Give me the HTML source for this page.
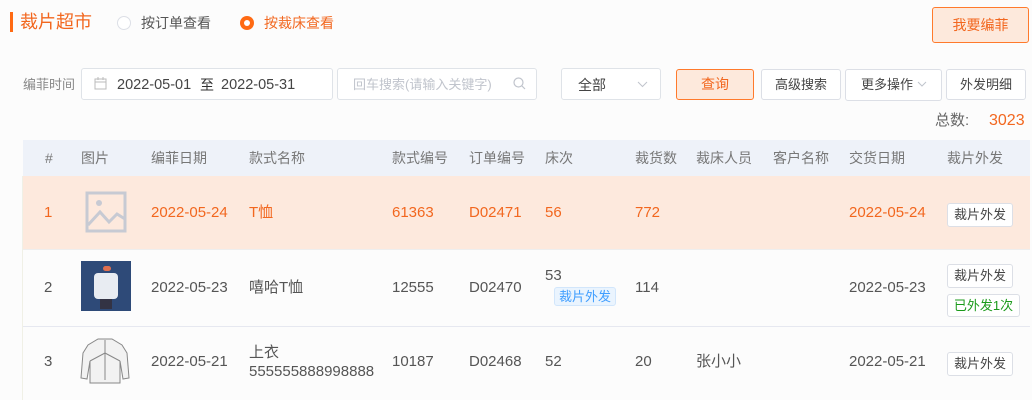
<!DOCTYPE html>
<html><head><meta charset="utf-8"><style>
*{box-sizing:border-box;margin:0;padding:0}
body{width:1032px;height:400px;overflow:hidden;background:#fcfcfc;font-family:"Liberation Sans","Noto Sans CJK SC",sans-serif;font-size:14px;color:#555;position:relative}
.a{position:absolute;white-space:nowrap}
.d{font-size:15px}
.box{position:absolute;border:1px solid #dfe3e8;border-radius:3px;background:#fff}
.btn{position:absolute;border:1px solid #dcdfe6;border-radius:3px;background:#fff;text-align:center;font-size:13px;color:#444}
.o{color:#f2671f}
.th{position:absolute;top:140px;height:36px;line-height:36px;color:#777;font-size:14px}
</style></head><body>
<div class="a" style="left:10px;top:12px;width:3px;height:20px;background:#ff6a13"></div>
<div class="a o" style="left:20px;top:9px;font-size:18px;line-height:26px">裁片超市</div>
<div class="a" style="left:117px;top:16px;width:14px;height:14px;border:1px solid #dcdfe6;border-radius:50%;background:#fff"></div>
<div class="a" style="left:141px;top:13px;line-height:20px;color:#555">按订单查看</div>
<div class="a" style="left:240px;top:16px;width:14px;height:14px;border-radius:50%;background:#ff6a13"><div style="margin:4px;width:6px;height:6px;background:#fff;border-radius:50%"></div></div>
<div class="a o" style="left:264px;top:13px;line-height:20px">按裁床查看</div>
<div class="btn" style="left:932px;top:7px;width:97px;height:36px;line-height:34px;background:#fde9dc;border-color:#ff7a2c;color:#f2671f;font-size:14px">我要编菲</div>

<div class="a" style="left:23px;top:75px;line-height:20px;color:#888;font-size:13px">编菲时间</div>
<div class="box" style="left:81px;top:68px;width:252px;height:32px"></div>
<svg class="a" style="left:94px;top:77px" width="13" height="13" viewBox="0 0 13 13" fill="none" stroke="#bbb"><rect x="1" y="2" width="11" height="10"/><line x1="1" y1="5" x2="12" y2="5"/><line x1="4" y1="0" x2="4" y2="3"/><line x1="9" y1="0" x2="9" y2="3"/></svg>
<div class="a" style="left:117px;top:75px;line-height:20px;color:#444;font-size:14.5px">2022-05-01</div>
<div class="a" style="left:200px;top:75px;line-height:20px;color:#333">至</div>
<div class="a" style="left:221px;top:75px;line-height:20px;color:#444;font-size:14.5px">2022-05-31</div>
<div class="box" style="left:337px;top:68px;width:200px;height:32px"></div>
<div class="a" style="left:353px;top:75px;line-height:20px;color:#c0c4cc;font-size:13px">回车搜索(请输入关键字)</div>
<svg class="a" style="left:513px;top:77px" width="13" height="13" viewBox="0 0 13 13" fill="none" stroke="#c0c4cc" stroke-width="1.2"><circle cx="5.5" cy="5.5" r="4.5"/><line x1="9" y1="9" x2="12" y2="12"/></svg>
<div class="box" style="left:561px;top:68px;width:100px;height:32px"></div>
<div class="a" style="left:578px;top:75px;line-height:20px;color:#444">全部</div>
<svg class="a" style="left:637px;top:81px" width="11" height="7" viewBox="0 0 11 7" fill="none" stroke="#c0c4cc"><path d="M1 1l4.5 4.5L10 1"/></svg>
<div class="btn" style="left:676px;top:69px;width:78px;height:31px;line-height:29px;background:#fde9dc;border-color:#ff7a2c;color:#f2671f;font-size:14px">查询</div>
<div class="btn" style="left:761px;top:69px;width:80px;height:31px;line-height:29px">高级搜索</div>
<div class="btn" style="left:845px;top:69px;width:97px;height:32px;line-height:30px;text-align:left;padding-left:15px">更多操作</div>
<svg class="a" style="left:917px;top:81px" width="10" height="6" viewBox="0 0 10 6" fill="none" stroke="#c0c4cc"><path d="M1 1l4 4 4-4"/></svg>
<div class="btn" style="left:946px;top:69px;width:80px;height:31px;line-height:29px">外发明细</div>
<div class="a" style="left:935px;top:111px;line-height:20px;font-size:15px;color:#666">总数:</div>
<div class="a o" style="left:989px;top:111px;line-height:20px;font-size:16px">3023</div>

<div class="a" style="left:23px;top:140px;width:1007px;height:36px;background:#eef2f9"></div>
<div class="a" style="left:23px;top:176px;width:1007px;height:73px;background:#fde9dd"></div>
<div class="a" style="left:23px;top:249px;width:1007px;height:1px;background:#eee"></div>
<div class="a" style="left:23px;top:326px;width:1007px;height:1px;background:#e6e8f0"></div>
<div class="a" style="left:22px;top:176px;width:1px;height:224px;background:#f0f0e6"></div>

<div class="th" style="left:45px">#</div>
<div class="th" style="left:81px">图片</div>
<div class="th" style="left:151px">编菲日期</div>
<div class="th" style="left:249px">款式名称</div>
<div class="th" style="left:392px">款式编号</div>
<div class="th" style="left:469px">订单编号</div>
<div class="th" style="left:545px">床次</div>
<div class="th" style="left:635px">裁货数</div>
<div class="th" style="left:696px">裁床人员</div>
<div class="th" style="left:773px">客户名称</div>
<div class="th" style="left:849px">交货日期</div>
<div class="th" style="left:947px">裁片外发</div>

<div class="o d">
<div class="a" style="left:44px;top:203px;line-height:20px">1</div>
<div class="a" style="left:151px;top:203px;line-height:20px">2022-05-24</div>
<div class="a" style="left:249px;top:203px;line-height:20px">T恤</div>
<div class="a" style="left:392px;top:203px;line-height:20px">61363</div>
<div class="a" style="left:469px;top:203px;line-height:20px">D02471</div>
<div class="a" style="left:545px;top:203px;line-height:20px">56</div>
<div class="a" style="left:635px;top:203px;line-height:20px">772</div>
<div class="a" style="left:849px;top:203px;line-height:20px">2022-05-24</div>
</div>
<svg class="a" style="left:85px;top:191px" width="42" height="42" viewBox="0 0 42 42" fill="none" stroke="#c7cad3" stroke-width="3"><rect x="2" y="2" width="38" height="38"/><circle cx="14" cy="12" r="3" fill="#c7cad3" stroke="none"/><path d="M3 34l12-13 9 10 8-8 8 5"/></svg>
<div class="btn" style="left:947px;top:203px;width:66px;height:24px;line-height:22px">裁片外发</div>

<div class="d">
<div class="a" style="left:44px;top:278px;line-height:20px">2</div>
<div class="a" style="left:151px;top:278px;line-height:20px">2022-05-23</div>
<div class="a" style="left:249px;top:278px;line-height:20px">嘻哈T恤</div>
<div class="a" style="left:392px;top:278px;line-height:20px">12555</div>
<div class="a" style="left:469px;top:278px;line-height:20px">D02470</div>
<div class="a" style="left:545px;top:266px;line-height:20px">53</div>
<div class="a" style="left:635px;top:278px;line-height:20px">114</div>
<div class="a" style="left:849px;top:278px;line-height:20px">2022-05-23</div>
</div>
<div class="a" style="left:81px;top:261px;width:50px;height:50px;background:#2e4a78">
<div class="a" style="left:22px;top:5px;width:8px;height:5px;background:#e07050;border-radius:3px"></div>
<div class="a" style="left:13px;top:12px;width:24px;height:26px;background:#e8ecf2;border-radius:4px"></div>
<div class="a" style="left:19px;top:38px;width:12px;height:10px;background:#334"></div></div>
<div class="a" style="left:554px;top:287px;height:19px;line-height:17px;padding:0 4px;border:1px solid #d2e6fb;background:#eaf4fe;color:#409eff;border-radius:3px;font-size:13px">裁片外发</div>
<div class="btn" style="left:947px;top:264px;width:66px;height:24px;line-height:22px">裁片外发</div>
<div class="btn" style="left:947px;top:294px;width:73px;height:23px;line-height:21px;color:#1a9a1a">已外发1次</div>

<div class="d">
<div class="a" style="left:44px;top:352px;line-height:20px">3</div>
<div class="a" style="left:151px;top:352px;line-height:20px">2022-05-21</div>
<div class="a" style="left:249px;top:343px;line-height:19px">上衣<br>555555888998888</div>
<div class="a" style="left:392px;top:352px;line-height:20px">10187</div>
<div class="a" style="left:469px;top:352px;line-height:20px">D02468</div>
<div class="a" style="left:545px;top:352px;line-height:20px">52</div>
<div class="a" style="left:635px;top:352px;line-height:20px">20</div>
<div class="a" style="left:696px;top:352px;line-height:20px">张小小</div>
<div class="a" style="left:849px;top:352px;line-height:20px">2022-05-21</div>
</div>
<svg class="a" style="left:80px;top:336px" width="50" height="48" viewBox="0 0 50 48" fill="#f2f2f2" stroke="#888" stroke-width="1"><path d="M18 3h14l10 6 5 8 2 25-6 1-3-18v22H10V25l-3 18-6-1 2-25 5-8z"/><path d="M25 4v40M10 25l15-8 15 8"/></svg>
<div class="btn" style="left:947px;top:352px;width:66px;height:24px;line-height:22px">裁片外发</div>
</body></html>
